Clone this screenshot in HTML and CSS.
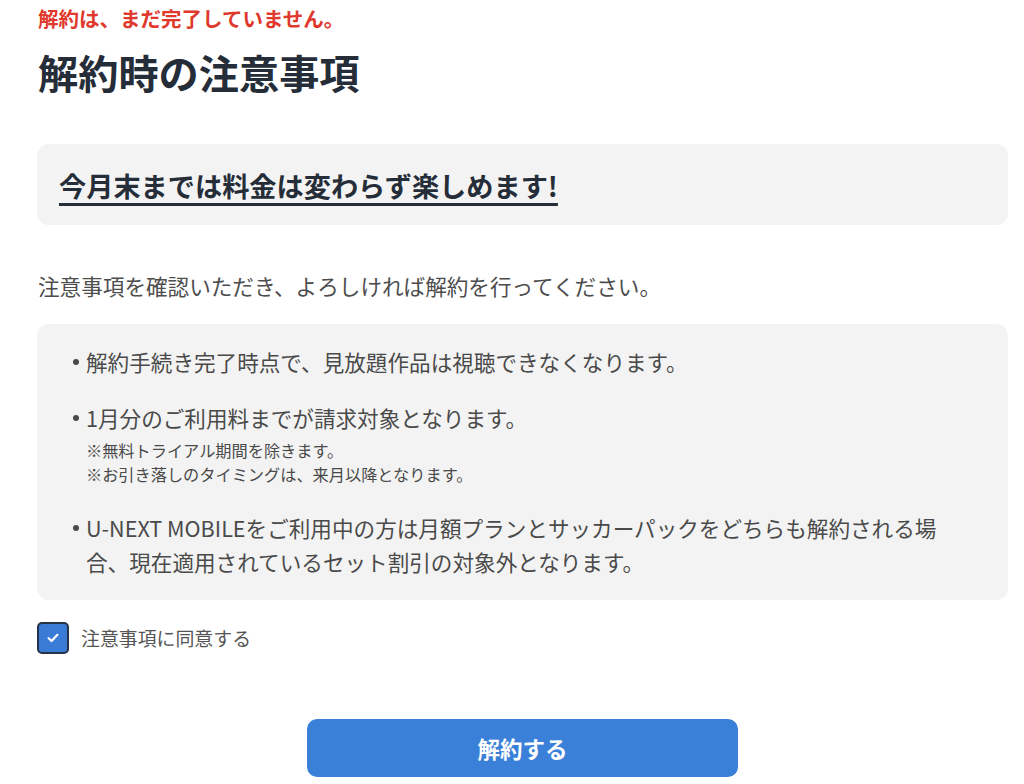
FILE: index.html
```html
<!DOCTYPE html>
<html lang="ja">
<head>
<meta charset="utf-8">
<title>解約時の注意事項</title>
<link rel="stylesheet" href="styles.css">
</head>
<body>
<main class="page">
  <p class="notice">解約は、まだ完了していません。</p>
  <h1 class="title">解約時の注意事項</h1>
  <section class="highlight">
    <h2 class="highlight-text">今月末までは料金は変わらず楽しめます!</h2>
  </section>
  <p class="lead">注意事項を確認いただき、よろしければ解約を行ってください。</p>
  <section class="notes-box">
    <ul class="notes">
      <li class="note-item">
        <span class="dot-col"><span class="dot"></span></span>
        <div class="note-body">解約手続き完了時点で、見放題作品は視聴できなくなります。</div>
      </li>
      <li class="note-item">
        <span class="dot-col"><span class="dot"></span></span>
        <div class="note-body">1月分のご利用料までが請求対象となります。
          <div class="sub">
            <p class="sub-line">※無料トライアル期間を除きます。</p>
            <p class="sub-line">※お引き落しのタイミングは、来月以降となります。</p>
          </div>
        </div>
      </li>
      <li class="note-item">
        <span class="dot-col"><span class="dot"></span></span>
        <div class="note-body">U-NEXT MOBILEをご利用中の方は月額プランとサッカーパックをどちらも解約される場合、現在適用されているセット割引の対象外となります。</div>
      </li>
    </ul>
  </section>
  <label class="agree">
    <span class="checkbox">
      <svg width="12" height="10" viewBox="0 0 12 10" aria-hidden="true"><path d="M1.6 5.2 L4.6 8 L10.4 1.8" fill="none" stroke="#fff" stroke-width="2.2" stroke-linecap="round" stroke-linejoin="round"/></svg>
    </span>
    <span class="agree-text">注意事項に同意する</span>
  </label>
  <div class="actions">
    <button class="submit" type="button">解約する</button>
  </div>
</main>
</body>
</html>
```
FILE: styles.css
```css
* { box-sizing: border-box; }
html, body { margin: 0; padding: 0; background: #fff; }
body {
  font-family: "Noto Sans CJK JP", "Noto Sans", sans-serif;
  color: #4a4a4a;
}
.page {
  padding: 0 16px 0 37px;
}
.notice {
  margin: 4px 0 0 1px;
  font-size: 20.5px;
  line-height: 28px;
  font-weight: 700;
  color: #e0382c;
}
.title {
  margin: 12px 0 0 1px;
  font-size: 40.2px;
  line-height: 56px;
  font-weight: 700;
  color: #252d39;
}
.highlight {
  margin-top: 44px;
  background: #f3f3f3;
  border-radius: 12px;
  height: 81px;
  padding: 23px 22px 0;
}
.highlight-text {
  margin: 0;
  font-size: 27.2px;
  line-height: 36px;
  font-weight: 700;
  color: #252d39;
  text-decoration: underline;
  text-decoration-thickness: 3px;
  text-underline-offset: 6px;
  display: inline-block;
}
.lead {
  margin: 45px 0 0 1px;
  font-size: 21.6px;
  line-height: 32px;
  color: #4d4d4d;
}
.notes-box {
  margin-top: 22px;
  background: #f3f3f3;
  border-radius: 12px;
  padding: 21px 58px 21px 36px;
}
.notes {
  list-style: none;
  margin: 0;
  padding: 0;
}
.note-item {
  display: flex;
  font-size: 21.6px;
  line-height: 34px;
  color: #4a4a4a;
}
.note-item + .note-item { margin-top: 22px; }
.note-item:last-child { margin-top: 23px; }
.dot-col {
  flex: 0 0 13px;
  height: 34px;
  display: flex;
  align-items: center;
}
.dot {
  width: 6px;
  height: 6px;
  border-radius: 50%;
  background: #4a4a4a;
}
.note-body { flex: 1; }
.sub { margin: 3px 0 2px; }
.sub-line {
  margin: 0;
  font-size: 16.2px;
  line-height: 24px;
  color: #4a4a4a;
}
.agree {
  margin-top: 22px;
  display: flex;
  align-items: center;
  gap: 12px;
}
.checkbox {
  width: 32px;
  height: 32px;
  border: 2px solid #273346;
  border-radius: 5px;
  background: #3a7bd6;
  display: flex;
  align-items: center;
  justify-content: center;
}
.agree-text {
  font-size: 18.9px;
  line-height: 32px;
  color: #555;
}
.actions {
  margin-top: 65px;
  display: flex;
  justify-content: center;
}
.submit {
  width: 431px;
  height: 58px;
  border: none;
  border-radius: 10px;
  background: #3a80d8;
  color: #fff;
  font-family: inherit;
  font-size: 22.5px;
  font-weight: 700;
}
```
